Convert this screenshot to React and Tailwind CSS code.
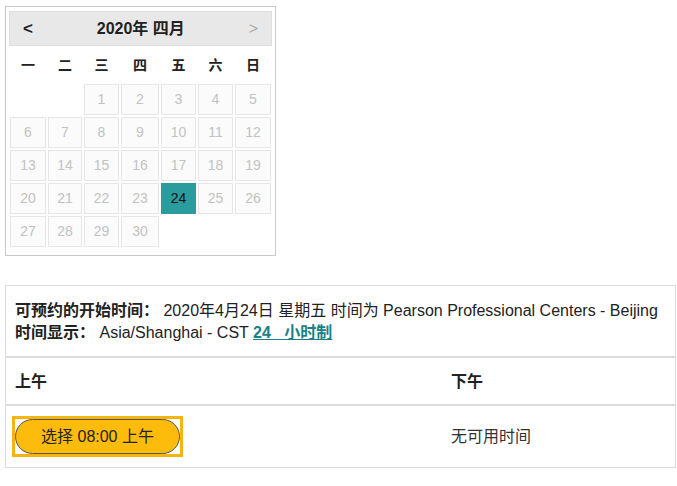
import React from "react";

const FONT = { fontFamily: '"Liberation Sans", "Noto Sans CJK SC", sans-serif' };

const COLS = "grid grid-cols-[36px_34px_35px_38px_35px_35px_36px] gap-x-[2px]";

function Calendar() {
  // April 2020 starts on a Wednesday (Monday-first week)
  const days = [null, null, ...Array.from({ length: 30 }, (_, i) => i + 1)];
  const weekdays = ["一", "二", "三", "四", "五", "六", "日"];

  return (
    <div className="ml-[5px] mt-[6px] w-[271px] border border-[#c9c9c9] px-[3px] pt-[4px] pb-[8px]">
      {/* ── Month header ── */}
      <div className="flex h-[35px] items-center justify-between bg-[#e8e8e8] px-[13px] border border-[#dedede]">
        <span className="text-[17px] font-bold text-[#222]">&lt;</span>
        <span className="text-[16px] font-semibold text-[#222]">2020年 四月</span>
        <span className="text-[16px] text-[#aaa]">&gt;</span>
      </div>

      {/* ── Weekday labels ── */}
      <div className={`${COLS} ml-[1px] h-[38px] items-center`}>
        {weekdays.map((w) => (
          <span key={w} className="text-center text-[14px] font-semibold text-[#222]">
            {w}
          </span>
        ))}
      </div>

      {/* ── Day grid ── */}
      <div className={`${COLS} ml-[1px] gap-y-[2px]`}>
        {days.map((d, i) =>
          d === null ? (
            <span key={"e" + i} />
          ) : d === 24 ? (
            <span
              key={d}
              className="flex h-[31px] items-center justify-center bg-[#2a9c9e] text-[14px] text-[#111]"
            >
              {d}
            </span>
          ) : (
            <span
              key={d}
              className="flex h-[31px] items-center justify-center border border-[#e6e6e6] bg-[#fbfbfb] text-[14px] text-[#c2c2c2]"
            >
              {d}
            </span>
          )
        )}
      </div>
    </div>
  );
}

function Slots() {
  return (
    <div className="ml-[5px] mt-[29px] w-[671px] border border-[#dcdcdc] text-[16px] text-[#222]">
      {/* ── Info ── */}
      <div className="border-b-2 border-[#dcdcdc] px-[9px] pt-[14px] pb-[12px] leading-[22px]">
        <p>
          <span className="font-semibold">可预约的开始时间：</span> 2020年4月24日 星期五 时间为 Pearson
          Professional Centers - Beijing
        </p>
        <p>
          <span className="font-semibold">时间显示：</span> Asia/Shanghai - CST{" "}
          <a href="#" className="font-semibold text-[#1a7f86] underline">
            24&nbsp;&nbsp;&nbsp;小时制
          </a>
        </p>
      </div>

      {/* ── Column headers ── */}
      <div className="flex h-[48px] items-center border-b-2 border-[#dcdcdc] pt-[2px] font-semibold">
        <span className="w-[436px] px-[9px]">上午</span>
        <span className="px-[9px]">下午</span>
      </div>

      {/* ── Times ── */}
      <div className="flex h-[61px] items-center">
        <div className="w-[436px] px-[6px]">
          <div className="inline-block border-[3px] border-[#f6b50e]">
            <button className="flex h-[35px] w-[165px] items-center justify-center rounded-full border border-[#555] bg-[#fdbb0c] text-[16px] text-[#222]">
              选择 08:00 上午
            </button>
          </div>
        </div>
        <span className="px-[9px] text-[#333]">无可用时间</span>
      </div>
    </div>
  );
}

export default function App() {
  return (
    <div className="min-h-screen bg-white" style={FONT}>
      <Calendar />
      <Slots />
    </div>
  );
}
